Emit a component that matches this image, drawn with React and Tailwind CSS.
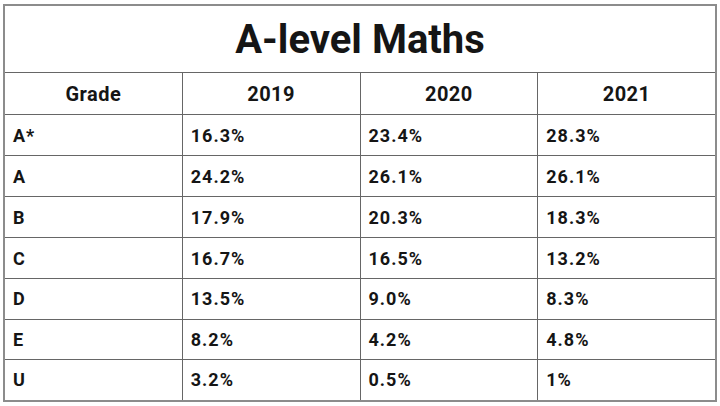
import React from 'react';

const years = ['2019', '2020', '2021'];

const rows = [
    ['A*', '16.3%', '23.4%', '28.3%'],
    ['A', '24.2%', '26.1%', '26.1%'],
    ['B', '17.9%', '20.3%', '18.3%'],
    ['C', '16.7%', '16.5%', '13.2%'],
    ['D', '13.5%', '9.0%', '8.3%'],
    ['E', '8.2%', '4.2%', '4.8%'],
    ['U', '3.2%', '0.5%', '1%'],
];

const App = () => {
    return (
        <div className="w-[720px] h-[406px] bg-white pt-[4px] pl-[3px] font-['Roboto',sans-serif] text-[#151515]">
            <div className="w-[714px] border-2 border-[#8c8c8c] bg-[#666] flex flex-col gap-px">
                <div className="h-[66px] bg-white flex items-center justify-center pt-[2px]">
                    <h1 className="text-[40px] font-bold">A-level Maths</h1>
                </div>
                <div className="grid grid-cols-4 gap-px">
                    <div className="h-[41px] bg-white flex items-center justify-center text-[20px] font-bold tracking-[0.5px]">Grade</div>
                    {years.map(y => (
                        <div key={y} className="h-[41px] bg-white flex items-center justify-center text-[20px] font-bold tracking-[0.5px]">{y}</div>
                    ))}
                    {rows.map((r, ri) => r.map((c, i) => (
                        <div key={r[0] + i} className={`${ri < 4 ? 'h-[40px]' : 'h-[39.5px]'} bg-white flex items-center pl-[8px] text-[18px] font-bold tracking-[1px]`}>{c}</div>
                    )))}
                </div>
            </div>
        </div>
    );
};

export default App;
